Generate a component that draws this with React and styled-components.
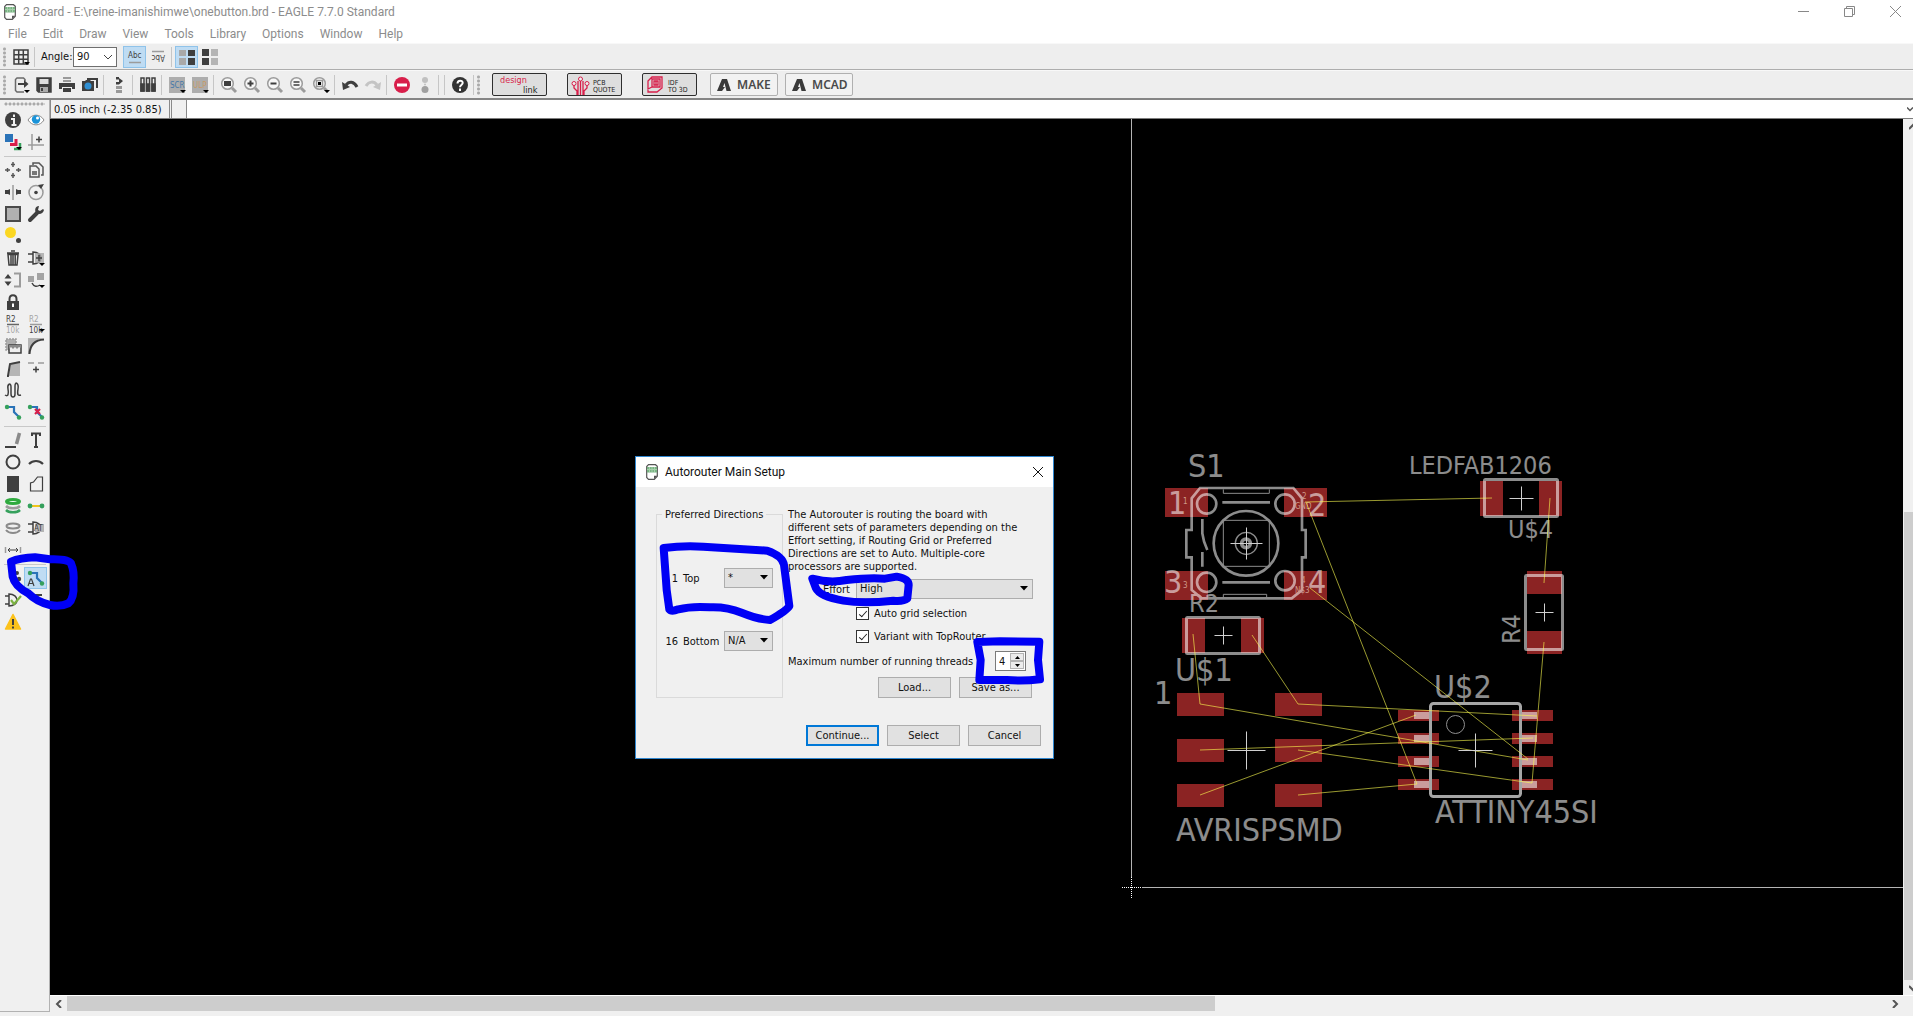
import React from "react";
import styled, { createGlobalStyle, css } from "styled-components";

const uiFont = `Roboto, "Open Sans", sans-serif`;
const badgeFont = `"Noto Sans", "Open Sans", sans-serif`;
const formFont = `"DejaVu Sans Condensed", "DejaVu Sans", sans-serif`;
const ink = "#3f3f3f";
const soft = "#9b9b9b";
const green = "#35a05c";
const blue = "#2a73b8";
const red = "#d81e4a";

const Global = createGlobalStyle`
  *, *::before, *::after { box-sizing: border-box; }
  html, body { margin: 0; height: 100%; overflow: hidden; }
  body { background: #f0f0f0; font-family: ${formFont}; font-size: 11px; color: #111; }
  button, input, select { font: inherit; color: inherit; margin: 0; }
`;

const Shell = styled.div`
  position: relative;
  display: flex;
  flex-direction: column;
  height: 100vh;
  padding-bottom: 4px;
  background: #f0f0f0;
  overflow: hidden;
`;

const TitleBar = styled.header`
  display: flex;
  align-items: center;
  height: 23px;
  padding-left: 4px;
  gap: 7px;
  background: #fff;
  font-family: ${uiFont};
  font-size: 12px;
  color: #8c8c8c;
`;

const TitleText = styled.h1`
  flex: 1;
  margin: 0;
  font-size: 12px;
  font-weight: 400;
  line-height: 20px;
  white-space: nowrap;
`;

const WindowControls = styled.div`
  display: flex;
  gap: 10px;
`;

const PlainButton = styled.button`
  display: flex;
  align-items: center;
  justify-content: center;
  padding: 0;
  border: 0;
  background: none;
`;

const WindowButton = styled(PlainButton)`
  width: 36px;
  height: 20px;
`;

const MenuBar = styled.nav`
  display: flex;
  gap: 16px;
  height: 20px;
  padding-left: 8px;
  background: #fff;
  font-family: ${uiFont};
  font-size: 12px;
  line-height: 22px;
`;

const MenuLink = styled.a`
  color: #8c8c8c;
  text-decoration: none;
`;

const Toolbar = styled.div`
  display: flex;
  align-items: center;
  height: ${(p) => p.$height}px;
  padding-left: 3px;
  background: #eeeeee;
  border-top: 1px solid #f8f8f8;
  border-bottom: ${(p) => (p.$last ? "2px solid #858585" : "1px solid #adadad")};
`;

const Grip = styled.span`
  flex: none;
  width: 3px;
  height: 20px;
  margin-right: 3px;
  background: radial-gradient(circle, #a9a9a9 1px, transparent 2px) 0 0 / 3px 4px;
`;

const Separator = styled.span`
  flex: none;
  width: 6px;
  height: 20px;
  background: linear-gradient(#c6c6c6, #c6c6c6) 2px 0 / 1px 100% no-repeat;
`;

const ToolButton = styled(PlainButton)`
  flex: none;
  width: 23px;
  height: 22px;
  ${(p) =>
    p.$active &&
    css`
      background: #bfdcf3;
      border: 1px solid #8fc3ea;
    `}
`;

const AngleLabel = styled.label`
  width: 35px;
  padding-left: 3px;
  font-size: 11px;
`;

const SelectWrap = styled.span`
  position: relative;
  display: flex;
  flex: none;
  width: ${(p) => p.$width || 49}px;
  height: 20px;
`;

const SelectBox = styled.select`
  appearance: none;
  width: 100%;
  height: 20px;
  padding: 0 3px;
  border: 1px solid ${(p) => (p.$light ? "#6f6f6f" : "#adadad")};
  border-radius: 0;
  background: ${(p) => (p.$light ? "#fff" : "#e1e1e1")};
  font-size: 11px;
  line-height: 18px;
`;

const SelectArrow = styled.svg`
  position: absolute;
  right: 5px;
  top: 7px;
  pointer-events: none;
`;

const AngleWrap = styled(SelectWrap)`
  margin-right: 6px;
`;

const BadgeRow = styled.div`
  display: flex;
  align-items: center;
  padding-left: 9px;
`;

const Badge = styled.button`
  display: flex;
  width: 55px;
  height: 23px;
  margin-right: 20px;
  padding: 0;
  border: 1px solid #2e2e2e;
  border-radius: 2px;
  background: #dedede;
`;

const AppBadge = styled.button`
  display: flex;
  align-items: center;
  gap: 6px;
  width: 68px;
  height: 23px;
  margin: 0 14px 0 -7px;
  padding: 0 0 0 6px;
  border: 1px solid #b0b0b0;
  border-radius: 2px;
  background: #f2f2f2;
  color: #4a4a4a;
  font-family: ${badgeFont};
  font-size: 12px;
  font-weight: 600;
`;

const Workspace = styled.div`
  display: flex;
  flex: 1;
  min-height: 0;
`;

const Palette = styled.aside`
  width: 50px;
  flex: none;
  padding: 2px 2px 0 1px;
  border-right: 1px solid #b2b2b2;
  border-bottom: 1px solid #b2b2b2;
`;

const PaletteGrip = styled.div`
  height: 4px;
  margin: 0 2px 3px 3px;
  background: radial-gradient(circle, #a9a9a9 1px, transparent 2px) 0 0 / 4px 4px;
`;

const PaletteGroup = styled.div`
  display: grid;
  grid-template-columns: 23px 23px;
  grid-auto-rows: 22px;
  & + & {
    padding-top: 6px;
    background: linear-gradient(#c8c8c8, #c8c8c8) 3px 3px / 42px 1px no-repeat;
  }
`;

const Main = styled.main`
  display: flex;
  flex-direction: column;
  flex: 1;
  min-width: 0;
`;

const CommandRow = styled.div`
  display: flex;
  height: 19px;
  border-bottom: 1px solid #7d7d7d;
`;

const Coordinates = styled.output`
  width: 120px;
  padding-left: 3px;
  border-left: 1px solid #8a8a8a;
  border-right: 1px solid #8a8a8a;
  font-size: 11px;
  line-height: 20px;
  white-space: nowrap;
`;

const StatusCell = styled.span`
  width: 16px;
  border-left: 1px solid #8a8a8a;
  border-right: 1px solid #8a8a8a;
  margin-left: 1px;
`;

const CommandInput = styled.input`
  flex: 1;
  min-width: 0;
  border: 0;
  padding: 0 4px;
  background: #fff;
  outline: 0;
`;

const ComboCorner = styled.span`
  display: flex;
  align-items: center;
  width: 6px;
  background: #fff;
  overflow: hidden;
`;

const CanvasRow = styled.div`
  display: flex;
  flex: 1;
  min-height: 0;
`;

const Canvas = styled.section`
  position: relative;
  flex: 1;
  min-width: 0;
  background: #000;
  overflow: hidden;
`;

const BoardSvg = styled.svg`
  display: block;
  width: 100%;
  height: 100%;
  font-family: ${formFont};
`;

const VScroll = styled.div`
  display: flex;
  flex-direction: column;
  width: 10px;
  padding-left: 1px;
  overflow: hidden;
  background: #f0f0f0;
`;

const HScroll = styled.div`
  display: flex;
  height: 17px;
  padding-bottom: 1px;
  border-top: 1px solid #fff;
  padding-right: 10px;
  background: #f0f0f0;
`;

const ScrollEnd = styled(PlainButton)`
  flex: none;
  width: 17px;
  height: 15px;
`;

const Track = styled.span`
  flex: ${(p) => p.$part} 1 0;
  background: ${(p) => (p.$thumb ? "#cdcdcd" : "transparent")};
`;

const Dialog = styled.div`
  position: absolute;
  left: 585px;
  top: 337px;
  width: 419px;
  border: 1px solid #2f86cf;
  background: #f0f0f0;
`;

const DialogTitle = styled.div`
  display: flex;
  align-items: center;
  gap: 7px;
  height: 30px;
  padding: 0 10px;
  background: #fff;
  font-family: ${uiFont};
  font-size: 12px;
`;

const DialogName = styled.h2`
  flex: 1;
  margin: 0;
  font-size: 12px;
  font-weight: 400;
`;

const DialogBody = styled.form`
  padding: 21px 12px 12px 20px;
  font-size: 11px;
  line-height: 13px;
`;

const Columns = styled.div`
  display: flex;
  gap: 5px;
`;

const Directions = styled.fieldset`
  width: 127px;
  height: 190px;
  margin: 0;
  padding: 0;
  border: 1px solid #dadada;
`;

const Legend = styled.legend`
  margin-left: 5px;
  padding: 0 3px;
  line-height: 13px;
`;

const LayerRows = styled.div`
  display: grid;
  gap: 43px;
  padding-top: 47px;
`;

const LayerRow = styled.div`
  display: flex;
  align-items: center;
`;

const LayerNumber = styled.span`
  width: 21px;
  text-align: right;
`;

const LayerName = styled.label`
  width: 46px;
  padding-left: 5px;
`;

const Settings = styled.div`
  width: 245px;
`;

const Intro = styled.p`
  margin: 0 0 6px;
  white-space: pre;
`;

const EffortRow = styled.div`
  display: flex;
  align-items: center;
  justify-content: flex-end;
  gap: 6px;
  margin-bottom: 3px;
`;

const CheckRow = styled.label`
  display: flex;
  align-items: center;
  gap: 5px;
  height: 23px;
  margin-left: 68px;
  white-space: nowrap;
`;

const CheckBox = styled.input`
  appearance: none;
  width: 13px;
  height: 13px;
  border: 1px solid #333;
  background: #fff;
  display: grid;
  place-items: center;
  &:checked::after {
    content: "";
    width: 8px;
    height: 4px;
    margin-top: -2px;
    border-left: 1px solid #222;
    border-bottom: 1px solid #222;
    transform: rotate(-48deg);
  }
`;

const ThreadsRow = styled.div`
  display: flex;
  align-items: center;
  justify-content: space-between;
  height: 20px;
  margin: 3px 7px 6px 0;
`;

const SpinBox = styled.span`
  display: flex;
  width: 31px;
  height: 20px;
  border: 1px solid #7a7a7a;
  background: #fff;
`;

const SpinInput = styled.input`
  width: 14px;
  padding: 0 0 0 3px;
  border: 0;
  background: none;
  outline: 0;
`;

const SpinArrows = styled.span`
  display: flex;
  flex-direction: column;
  width: 14px;
  padding: 1px 0;
`;

const SpinButton = styled(PlainButton)`
  flex: 1;
  border: 1px solid #b4b4b4;
  background: #ececec;
`;

const ButtonRow = styled.div`
  display: flex;
  justify-content: flex-end;
  gap: 8px;
  padding-right: ${(p) => (p.$inset ? 1 : 0)}px;
  margin-top: ${(p) => (p.$inset ? 0 : 27)}px;
`;

const PushButton = styled.button`
  width: 73px;
  height: 21px;
  padding: 0;
  border: ${(p) => (p.$default ? "2px solid #0078d7" : "1px solid #adadad")};
  background: #e1e1e1;
  font-size: 11px;
  line-height: 13px;
`;

const DialogMarks = styled.svg`
  position: absolute;
  inset: 0;
  pointer-events: none;
`;

const PaletteMark = styled.svg`
  position: absolute;
  left: 0;
  top: 540px;
  pointer-events: none;
`;

function Icon({ children }) {
  return (
    <svg width="16" height="16" viewBox="0 0 16 16" fill="none" stroke={ink} strokeWidth="1.5" overflow="visible" aria-hidden="true">
      {children}
    </svg>
  );
}

const More = () => <path d="M11 13h6l-3 3z" fill="#000" stroke="none" />;

function BoardIcon() {
  return (
    <svg width="12" height="16" viewBox="0 0 12 16" aria-hidden="true">
      <path d="M2.5.7h7l1.8 1.6v10l-3 3H2.5L.7 13.5v-11z" fill="#fff" stroke="#555" strokeWidth="1.2" />
      <path d="M1 3h10v5.5H1z" fill="#79b383" />
      <path d="M1 5.5h10M3.500 3v5M6 3v5M8.500 3v5" stroke="#a5cfab" />
      <path d="M8 15.200v-3.400h3.500z" fill="#555" />
    </svg>
  );
}

const Lens = ({ children }) => (
  <Icon>
    <circle cx="6.500" cy="6.500" r="5.800" stroke={soft} fill="#f7f7f7" />
    <path d="M11 11l4 4" stroke={soft} strokeWidth="3" />
    {children}
  </Icon>
);

const wire = (
  <>
    <path d="M2 3h7v5l5 5" stroke={blue} strokeWidth="2.200" />
    <circle cx="2" cy="3" r="2.200" fill={green} stroke="none" />
    <circle cx="14" cy="13.500" r="2.200" fill={green} stroke="none" />
  </>
);

const icons = {
  grid: <Icon><path d="M1 1h14v14H1zM5.700 1v14M10.300 1v14M1 5.700h14M1 10.300h14" /><More /></Icon>,
  abc: <Icon><text x="1" y="9" fontSize="8" fill={ink} stroke="none">Abc</text><path d="M2 13.500h12" stroke={soft} /></Icon>,
  abcFlip: <Icon><path d="M2 2.500h12" stroke={soft} /><text x="-15" y="-6" fontSize="8" fill={ink} stroke="none" transform="rotate(180)">Abc</text></Icon>,
  tilesA: <Icon><g stroke="none"><path d="M0 1h7v6H0zM0 9h7v7H0z" fill="#a9a9a9" /><path d="M9 1h7v6H9zM9 9h7v7H9z" fill={ink} /></g></Icon>,
  tilesB: <Icon><g stroke="none"><path d="M0 0h7v7H0zM0 9h7v7H0z" fill={ink} /><path d="M9 0h7v7H9zM9 9h7v7H9z" fill="#b4b4b4" /></g></Icon>,
  open: <Icon><path d="M12 4V2.500L10.500 1H4L2.500 2.500v11L4 15h7" stroke="#6a6a6a" /><path d="M5 6h6V3l4.500 4-4.500 4V8H5z" fill={ink} stroke="none" /><More /></Icon>,
  save: <Icon><path d="M1 1h14v14H2.500L1 13.500z" fill={ink} /><path d="M3.500 2h9v5h-9z" fill="#ddd" stroke="none" /><path d="M4 10h8v5H4z" fill="#aaa" stroke="none" /><path d="M5 11h2v3H5z" fill={ink} stroke="none" /></Icon>,
  print: <Icon><g stroke="none"><path d="M4 0h8v2H4zM4 3h8v2H4z" fill="#999" /><path d="M0 6h16v6h-3v-2H3v2H0z" fill={ink} /><path d="M4 11h8v4H4z" fill={ink} /></g></Icon>,
  camera: <Icon><path d="M5 2h10v9" stroke={ink} strokeWidth="2" /><path d="M0 4h3l1-1h4l1 1h3v10H0z" fill={ink} stroke="none" /><circle cx="6" cy="9" r="3.500" fill="#2f8fd3" stroke="none" /></Icon>,
  swap: <Icon><path d="M5 0h3v1l4 3-4 3.500H5V5h3V2.500H5z" fill={ink} stroke="none" /><path d="M5 9h6v3H5zM5 13h6v3H5z" fill="#999" stroke="none" /></Icon>,
  tubes: <Icon><path d="M1 1h3v13H1zM6.500 1h3v13h-3zM12 1h3v13h-3z" /><path d="M1 7h3v7H1zM6.500 7h3v7h-3zM12 7h3v7h-3z" fill={ink} /></Icon>,
  scr: <Icon><path d="M0 0h16v16H0z" fill="#adadad" stroke="none" /><text x="1" y="11" fontSize="8" fill="#4478a8" stroke="none">SCR</text><More /></Icon>,
  ulp: <Icon><path d="M0 0h16v16H0z" fill="#adadad" stroke="none" /><text x="1" y="11" fontSize="8" fill="#c79b64" stroke="none">ULP</text><More /></Icon>,
  zoomFit: <Lens><path d="M3 4h7v5H3z" fill={ink} stroke="none" /></Lens>,
  zoomIn: <Lens><path d="M3.500 6.500h6M6.500 3.500v6" strokeWidth="2" /></Lens>,
  zoomOut: <Lens><path d="M3.500 6.500h6" strokeWidth="2" /></Lens>,
  zoomRedraw: <Lens><path d="M3.500 5h6M3.500 8h6" /></Lens>,
  zoomSelect: <Lens><path d="M3.500 3.500h6v6h-6z" stroke={soft} /><path d="M5 5h3v3H5z" fill="#000" stroke="none" /><More /></Lens>,
  undo: <Icon><path d="M4 8c3-4 8-4 11 2" strokeWidth="3" /><path d="M0 5l1 8 7-3z" fill={ink} stroke="none" /></Icon>,
  redo: <Icon><path d="M12 8C9 4 4 4 1 9" strokeWidth="3" stroke="#c4c4c4" /><path d="M16 5l-1 8-7-3z" fill="#c4c4c4" stroke="none" /></Icon>,
  stop: <Icon><circle cx="8" cy="8" r="8" fill={red} stroke="none" /><path d="M3 8h10" stroke="#fff" strokeWidth="3" /></Icon>,
  dots: <Icon><circle cx="8" cy="3" r="3" fill="#c0c0c0" stroke="none" /><circle cx="8" cy="7.500" r="1" fill="#c0c0c0" stroke="none" /><circle cx="8" cy="12.500" r="3.500" fill="#a0a0a0" stroke="none" /></Icon>,
  help: <Icon><circle cx="8" cy="8" r="8" fill="#333" stroke="none" /><path d="M5.500 6.500c0-4 5.500-3.500 5.200-.5C10.500 8 8 8 8 10.200M8 11.500V14" stroke="#fff" strokeWidth="2" /></Icon>,
  info: <Icon><circle cx="8" cy="8" r="8" fill={ink} stroke="none" /><path d="M6 7h3v6M6.500 13h5M9 2.500v2.500" stroke="#f0f0f0" strokeWidth="2" /></Icon>,
  eye: <Icon><path d="M0 8c4-6.500 12-6.500 16 0-4 6.500-12 6.500-16 0z" fill="#fff" stroke="#8c8c8c" strokeWidth="1" /><circle cx="8" cy="7.500" r="4.200" fill="#1a93d8" stroke="none" /><circle cx="9.500" cy="6" r="1.500" fill="#fff" stroke="none" /></Icon>,
  layers: <Icon><path d="M0 0h8v8H0z" fill={blue} stroke="none" /><path d="M5 10.500h6V5" stroke={red} strokeWidth="3" /><path d="M9 15h6V9" stroke={green} strokeWidth="2.500" /><More /></Icon>,
  mark: <Icon><path d="M4 0v16M0 11h16" stroke={soft} /><path d="M8 5.500h6M11 2.500v6" /></Icon>,
  move: <Icon><path d="M8 0v5M6 2.500h4M8 11v5M6 13.500h4M0 8h5M2.500 6v4M11 8h5M13.500 6v4" stroke="#555" /></Icon>,
  copy: <Icon><path d="M5 3V1h6l4 4v8h-2" stroke="#555" /><path d="M2 4h6l3 3v8H2z" fill="#f0f0f0" stroke="#555" /><path d="M4 9h5v4H4z" fill="#777" stroke="none" /></Icon>,
  mirror: <Icon><path d="M8 1v15" stroke={soft} /><path d="M0 6h3l2-1v6l-2-1H0zM16 6h-3l-2-1v6l2-1h3z" fill={ink} stroke="none" /></Icon>,
  rotate: <Icon><circle cx="8" cy="8.500" r="7" stroke={soft} /><circle cx="8" cy="8.500" r="1.800" fill={ink} stroke="none" /><path d="M10 1l6-1-3 5z" fill={ink} stroke="none" /></Icon>,
  group: <Icon><path d="M1 1h14v14H1z" fill="#b1b1b1" stroke="#4a4a4a" strokeWidth="2" /></Icon>,
  wrench: <Icon><path d="M2 14l7-7" strokeWidth="4" strokeLinecap="round" /><path d="M15 3l-3 2-2-1 1-4C7 0 6.500 4 8 7c3 2 7 1 8-3z" fill={ink} stroke="none" /></Icon>,
  ripup: <Icon><circle cx="5.500" cy="4.500" r="5.500" fill="#fbd722" stroke="none" /><circle cx="13.500" cy="12.500" r="2.500" fill={ink} stroke="none" /></Icon>,
  trash: <Icon><path d="M2 3h12M6 1h4M3 4.500h10L12 15H4zM6 5v10M8 5v10M10.200 5v10" /></Icon>,
  add: <Icon><path d="M0 4h5M0 12h5M5 2v12c5 0 8-3 8-6s-3-6-8-6z" /><path d="M7 3h9v10H7z" fill="#a8a8a8" stroke="none" opacity=".8" /><path d="M8 8h6M11 5v6" /><More /></Icon>,
  pinswap: <Icon><path d="M3 2l3.500 4.500h-7zM3 14L-.5 9.500h7z" fill={ink} stroke="none" /><path d="M9 1.500h6v13H9" stroke={soft} strokeWidth="2" /></Icon>,
  replace: <Icon><path d="M0 4h6v6H0zM9 1h7v7H9z" fill="#a3a3a3" stroke="none" /><path d="M4 11c2 4 5 4 8 2" /><More /></Icon>,
  lock: <Icon><path d="M4.500 8V5c0-5 7-5 7 0v3" strokeWidth="2" /><path d="M2 7h12v9H2z" fill={ink} stroke="none" /><path d="M8 9.500V13" stroke="#fff" strokeWidth="2" /></Icon>,
  name: <Icon><text x="1" y="6" fontSize="8" fill={ink} stroke="none">R2</text><path d="M2 8.500h12" stroke="#666" /><text x="1" y="17" fontSize="8" fill="#a5a5a5" stroke="none">10k</text></Icon>,
  value: <Icon><text x="1" y="6" fontSize="8" fill="#a5a5a5" stroke="none">R2</text><path d="M2 8.500h12" stroke={soft} /><text x="1" y="17" fontSize="8" fill={ink} stroke="none">10k</text><More /></Icon>,
  smash: <Icon><path d="M1 1h10v11H1z" fill="#b0b0b0" stroke={soft} strokeDasharray="2 1" /><path d="M4 7h12v8H4z" fill="#f0f0f0" /><path d="M4 7h12v3l-2-1-2 2-2-2-2 2-2-2-2 2z" fill="#8a8a8a" stroke="none" /></Icon>,
  miter: <Icon><path d="M0 0h16C6 2 3 7 2 16H0z" fill="#b5b5b5" stroke="none" /><path d="M1.500 16C2 6 7 2 16 1.500" strokeWidth="2" /></Icon>,
  split: <Icon><path d="M4 16L6 3l9-1v14z" fill="#b5b5b5" stroke="none" /><path d="M2 16h1L5 4l10-2" strokeWidth="2" /></Icon>,
  optimize: <Icon><path d="M0 3h6M10 3h6" stroke={soft} /><path d="M5 9.500h6M8 6.500v6" /></Icon>,
  meander: <Icon><path d="M0 13c3 2 4-1 3-6s3-7 3-2v7c0 4 4 4 4 0V4c0-5 4-3 3 3s0 7 3 6" /></Icon>,
  route: <Icon>{wire}</Icon>,
  unroute: <Icon>{wire}<path d="M7 5l5 5M12 5l-5 5" stroke={red} strokeWidth="2.200" /></Icon>,
  line: <Icon><path d="M0 15h11" strokeWidth="2" /><path d="M14.500 1l-3 11" stroke="#8a8a8a" strokeWidth="3.500" /></Icon>,
  text: <Icon><path d="M4 4V1.500h8V4M8 2v13M6 15h4" strokeWidth="2" /></Icon>,
  circle: <Icon><circle cx="8" cy="8" r="6.500" strokeWidth="2" /></Icon>,
  arc: <Icon><path d="M1 10c4-4 10-4 14 0" strokeWidth="2.200" /></Icon>,
  rect: <Icon><path d="M2 0h12v16H2z" fill={ink} stroke="none" /></Icon>,
  polygon: <Icon><path d="M2.500 15V7l3-1 4-5h5v14z" strokeWidth="1.200" /></Icon>,
  via: <Icon><g strokeWidth="2.500"><path d="M1 12c3 3 11 3 14 0" stroke={green} /><path d="M1 8c3 3 11 3 14 0" stroke={soft} /><ellipse cx="8" cy="3.500" rx="6.500" ry="2" stroke="#2faa3f" strokeWidth="3" fill="#e8fff0" /></g></Icon>,
  signal: <Icon><path d="M3 8h10" stroke="#f0c419" strokeWidth="2" /><circle cx="2" cy="8" r="2.400" fill={green} stroke="none" /><circle cx="14" cy="8" r="2.400" fill={green} stroke="none" /></Icon>,
  hole: <Icon><ellipse cx="8" cy="6" rx="6.500" ry="2.500" stroke="#8a8a8a" strokeWidth="2" /><path d="M1 10c3 4 11 4 14 0" stroke="#8a8a8a" strokeWidth="2" /></Icon>,
  attribute: <Icon><path d="M0 4h5M0 12h5M5 2v12c5 0 8-3 8-6s-3-6-8-6z" /><path d="M7 4h9v8H7z" fill="#b5b5b5" stroke="none" /><text x="6" y="11" fontSize="8" fill={ink} stroke="none">AT</text></Icon>,
  dimension: <Icon><path d="M.500 5v6M15.500 5v6" stroke={soft} /><path d="M3 8h10M5 6L3 8l2 2M11 6l2 2-2 2" strokeWidth="1" /></Icon>,
  ratsnest: <Icon><g fill={ink} stroke="none"><circle cx="7" cy="1" r="2.200" /><circle cx="12" cy="3" r="2" /><circle cx="14" cy="9" r="2.200" /><circle cx="7" cy="10" r="2" /></g></Icon>,
  auto: <Icon>{wire}<path d="M0 16l2.500-7h1L6 16M1 13.500h4" strokeWidth="1.200" /></Icon>,
  erc: <Icon><path d="M0 4h4M0 12h4M4 2v12c5 0 8-3 8-6S9 2 4 2z" /><path d="M6 8l3 4 7-8" stroke="#7bb241" strokeWidth="2.200" /></Icon>,
  drc: <Icon><path d="M3 3h11" strokeWidth="2" /><path d="M3 7h11" stroke={soft} strokeWidth="2" /></Icon>,
  warning: <Icon><path d="M8 .500l7.500 14.500H.5z" fill="#fcc21b" stroke="#fcc21b" strokeLinejoin="round" /><path d="M8 5v6M8 12.500v2" strokeWidth="2" /></Icon>,
};

const menus = ["File", "Edit", "Draw", "View", "Tools", "Library", "Options", "Window", "Help"];

const actionGroups = [
  ["open", "save", "print", "camera"],
  ["swap"],
  ["tubes"],
  ["scr", "ulp"],
  ["zoomFit", "zoomIn", "zoomOut", "zoomRedraw", "zoomSelect"],
  ["undo", "redo"],
  ["stop", "dots"],
  [],
  ["help"],
];

const paletteGroups = [
  ["info", "eye", "layers", "mark"],
  [
    "move", "copy", "mirror", "rotate", "group", "wrench", "ripup", null, "trash", "add", "pinswap", "replace",
    "lock", null, "name", "value", "smash", "miter", "split", "optimize", "meander", null, "route", "unroute",
  ],
  ["line", "text", "circle", "arc", "rect", "polygon", "via", "signal", "hole", "attribute", "dimension", null],
  ["ratsnest", "auto", "erc", "drc", "warning"],
];

const Chevron = ({ d }) => (
  <svg width="8" height="8" viewBox="0 0 8 8" fill="none" stroke="#555" strokeWidth="2" aria-hidden="true">
    <path d={d} />
  </svg>
);

function DropDown({ id, options, width }) {
  return (
    <SelectWrap $width={width}>
      <SelectBox id={id}>
        {options.map((o) => <option key={o}>{o}</option>)}
      </SelectBox>
      <SelectArrow width="8" height="5" viewBox="0 0 8 5" aria-hidden="true">
        <path d="M0 0h8L4 4.500z" fill="#000" />
      </SelectArrow>
    </SelectWrap>
  );
}

const AMark = () => (
  <svg width="14" height="14" viewBox="0 0 14 14" aria-hidden="true">
    <path d="M0 13L5 1h5l4 12h-4.500L7.500 5 6 9h2l-3 4z" fill="#3a3a3a" />
  </svg>
);

function Cross({ x, y, r }) {
  return <path d={`M${x - r} ${y}h${2 * r}M${x} ${y - r}v${2 * r}`} />;
}

const pads = [
  [1165, 488, 43, 29], [1284, 488, 43, 29], [1165, 571, 43, 29], [1284, 571, 43, 29],
  [1182, 618, 23, 35], [1241, 618, 23, 35],
  [1177, 693, 47, 23], [1275, 693, 47, 23], [1177, 739, 47, 23], [1275, 739, 47, 23], [1177, 784, 47, 23], [1275, 784, 47, 23],
  [1480, 481, 23, 35], [1539, 481, 23, 35], [1527, 571, 35, 23], [1527, 631, 35, 23],
  ...[710, 733, 756, 779].flatMap((y) => [[1398, y, 41, 11], [1512, y, 41, 11]]),
];

const airwires = [
  "1305,502 1492,498", "1306,502 1417,784", "1310,588 1528,759", "1550,498 1544,583", "1544,642 1532,783",
  "1193,634 1200,704 1528,760", "1252,635 1298,704 1537,716", "1200,750 1533,738", "1298,750 1532,783",
  "1200,795 1416,715", "1298,795 1417,784",
];

const labels = [
  [1188, 477, 32, "S1"], [1168, 514, 32, "1"], [1308, 516, 32, "2"], [1164, 593, 32, "3"], [1308, 593, 32, "4"],
  [1189, 612, 25, "R2"], [1175, 681, 32, "U$1"], [1154, 704, 32, "1"], [1176, 841, 32, "AVRISPSMD"],
  [1409, 474, 25, "LEDFAB1206"], [1508, 538, 25, "U$4"], [1434, 698, 32, "U$2"], [1435, 823, 32, "ATTINY45SI"],
];

const netLabels = [
  [1183, 504, "1"], [1302, 499, "2"], [1295, 509, "GND"], [1183, 588, "3"], [1301, 583, "4"], [1295, 593, "N$3"],
];

/* Board geometry uses window coordinates; the outer group shifts it to the canvas origin. */
function Board() {
  return (
    <BoardSvg role="img" aria-label="Board layout">
      <g transform="translate(-50 -119)">
        <g fill="#8b2323" shapeRendering="crispEdges">
          {pads.map(([x, y, w, h]) => <rect key={`${x}-${y}`} x={x} y={y} width={w} height={h} />)}
        </g>
        <g opacity=".55" fill="none" stroke="#fff">
          <g transform="translate(1140 430) scale(.33333)" strokeWidth="8">
            <path d="M180 174H460L486 205V300H497V382H486V480L455 505H185L155 480V382H139V300H155V205Z" />
            <circle cx="200" cy="222" r="29" />
            <circle cx="435" cy="222" r="29" />
            <circle cx="200" cy="457" r="29" />
            <circle cx="435" cy="452" r="29" />
            <circle cx="318" cy="340" r="97" />
            <circle cx="318" cy="340" r="13" strokeWidth="11" />
            <path d="M247 217H390M247 457H390M187 267V310Q190 335 202 360M187 366V410" />
            <path d="M250 271H388V409H250ZM250 178V190H388V178M250 505V493H380V505" strokeWidth="3" />
            <circle cx="319" cy="340" r="33" strokeWidth="4" />
          </g>
          <g strokeWidth="3">
            <rect x="1186.500" y="617.500" width="73" height="36" rx="1" />
            <rect x="1484.500" y="479.500" width="73" height="37" rx="1" />
            <rect x="1525.500" y="575.500" width="37" height="74" rx="1" />
          </g>
          <g fill="#fff" stroke="none">
            {labels.map(([x, y, size, text]) => <text key={`${x}-${y}`} x={x} y={y} fontSize={size}>{text}</text>)}
            <text fontSize="25" transform="translate(1520 644) rotate(-90)">R4</text>
            {[712, 735, 758, 781].map((y) => <path key={y} d={`M1414 ${y}h15v7h-15zM1522 ${y}h15v7h-15z`} />)}
          </g>
        </g>
        <rect x="1430.500" y="703.500" width="90" height="93" rx="3" fill="none" stroke="#a6a6a6" strokeWidth="3" />
        <circle cx="1455.500" cy="724.500" r="9" fill="none" stroke="#8f8f8f" />
        <g fill="#cf9a8a" fontSize="8">
          {netLabels.map(([x, y, text]) => <text key={`${x}-${y}`} x={x} y={y}>{text}</text>)}
        </g>
        <g fill="none" stroke="#ffff50" strokeOpacity=".6">
          {airwires.map((points) => <polyline key={points} points={points} />)}
        </g>
        <g stroke="#d0d0d0" fill="none">
          <Cross x={1246.5} y={543.5} r={16} />
          <Cross x={1223.5} y={635.5} r={9} />
          <Cross x={1246.5} y={750.5} r={19} />
          <Cross x={1521.5} y={498.5} r={12} />
          <Cross x={1544.5} y={612.5} r={9} />
          <Cross x={1475.5} y={750.5} r={17} />
          <path d="M1131.500 119V877M1142 887.500H4000" stroke="#b4b4b4" />
          <path d="M1131.500 877v21M1122 887.500h20" stroke="#fff" strokeDasharray="1 1" />
        </g>
      </g>
    </BoardSvg>
  );
}

function AutorouterDialog() {
  return (
    <Dialog role="dialog" aria-labelledby="setup-title">
      <DialogTitle>
        <BoardIcon />
        <DialogName id="setup-title">Autorouter Main Setup</DialogName>
        <PlainButton aria-label="Close">
          <svg width="10" height="10" viewBox="0 0 10 10" stroke="#111" aria-hidden="true"><path d="M0 0l10 10M10 0L0 10" /></svg>
        </PlainButton>
      </DialogTitle>
      <DialogBody onSubmit={(e) => e.preventDefault()}>
        <Columns>
          <Directions>
            <Legend>Preferred Directions</Legend>
            <LayerRows>
              <LayerRow>
                <LayerNumber>1</LayerNumber>
                <LayerName htmlFor="layer-top">Top</LayerName>
                <DropDown id="layer-top" options={["*", "N/A"]} />
              </LayerRow>
              <LayerRow>
                <LayerNumber>16</LayerNumber>
                <LayerName htmlFor="layer-bottom">Bottom</LayerName>
                <DropDown id="layer-bottom" options={["N/A", "*"]} />
              </LayerRow>
            </LayerRows>
          </Directions>
          <Settings>
            <Intro>{`The Autorouter is routing the board with
different sets of parameters depending on the
Effort setting, if Routing Grid or Preferred
Directions are set to Auto. Multiple-core
processors are supported.`}</Intro>
            <EffortRow>
              <label htmlFor="effort">Effort</label>
              <DropDown id="effort" options={["High", "Medium", "Low"]} width={177} />
            </EffortRow>
            <CheckRow><CheckBox type="checkbox" defaultChecked />Auto grid selection</CheckRow>
            <CheckRow><CheckBox type="checkbox" defaultChecked />Variant with TopRouter</CheckRow>
            <ThreadsRow>
              <label htmlFor="threads">Maximum number of running threads</label>
              <SpinBox>
                <SpinInput id="threads" defaultValue="4" />
                <SpinArrows>
                  <SpinButton type="button" aria-label="More threads"><svg width="5" height="3" aria-hidden="true"><path d="M0 3h5L2.500 0z" /></svg></SpinButton>
                  <SpinButton type="button" aria-label="Fewer threads"><svg width="5" height="3" aria-hidden="true"><path d="M0 0h5L2.500 3z" /></svg></SpinButton>
                </SpinArrows>
              </SpinBox>
            </ThreadsRow>
            <ButtonRow $inset>
              <PushButton type="button">Load...</PushButton>
              <PushButton type="button">Save as...</PushButton>
            </ButtonRow>
          </Settings>
        </Columns>
        <ButtonRow>
          <PushButton $default>Continue...</PushButton>
          <PushButton type="button">Select</PushButton>
          <PushButton type="button">Cancel</PushButton>
        </ButtonRow>
      </DialogBody>
      <DialogMarks width="417" height="301" viewBox="18 21 1251 903" fill="none" stroke="#0000f5" strokeWidth="24" strokeLinecap="round" strokeLinejoin="round" aria-hidden="true">
        <path d="M101 294Q160 286 220 290L412 302Q458 318 462 345L478 468Q470 482 420 510Q385 508 335 488Q290 470 240 472Q185 468 145 478Q124 486 118 478L110 420Q105 350 101 294Z" />
        <path d="M547 386Q600 400 650 390Q720 382 765 386L800 380Q836 386 836 405L832 445Q820 455 790 452Q700 462 640 452Q570 440 558 415Z" />
        <path d="M1042 576L1110 574L1228 575L1224 630L1230 688Q1180 694 1130 690L1048 690L1052 630Z" />
      </DialogMarks>
    </Dialog>
  );
}

export default function App() {
  return (
    <Shell>
      <Global />
      <TitleBar>
        <BoardIcon />
        <TitleText>2 Board - E:\reine-imanishimwe\onebutton.brd - EAGLE 7.7.0 Standard</TitleText>
        <WindowControls>
          <WindowButton aria-label="Minimize"><svg width="11" height="11" stroke="#888"><path d="M0 5.500h11" /></svg></WindowButton>
          <WindowButton aria-label="Restore"><svg width="11" height="11" stroke="#888" fill="none"><path d="M.500 2.500h8v8h-8zM2.500 2.500v-2h8v8h-2" /></svg></WindowButton>
          <WindowButton aria-label="Close window"><svg width="11" height="11" stroke="#888"><path d="M0 0l11 11M11 0L0 11" /></svg></WindowButton>
        </WindowControls>
      </TitleBar>
      <MenuBar>{menus.map((m) => <MenuLink key={m} href="#">{m}</MenuLink>)}</MenuBar>
      <Toolbar $height={27}>
        <Grip />
        <ToolButton aria-label="Grid">{icons.grid}</ToolButton>
        <Separator />
        <AngleLabel htmlFor="angle">Angle:</AngleLabel>
        <AngleWrap $width={44}>
          <SelectBox id="angle" $light><option>90</option><option>45</option></SelectBox>
          <SelectArrow width="8" height="6" fill="none" stroke="#444" aria-hidden="true"><path d="M0 1l4 4 4-4" /></SelectArrow>
        </AngleWrap>
        <ToolButton $active aria-label="Upright text">{icons.abc}</ToolButton>
        <ToolButton aria-label="Turned text">{icons.abcFlip}</ToolButton>
        <Separator />
        <ToolButton $active aria-label="Left tiles">{icons.tilesA}</ToolButton>
        <ToolButton aria-label="Right tiles">{icons.tilesB}</ToolButton>
      </Toolbar>
      <Toolbar $height={30} $last>
        <Grip />
        {actionGroups.map((group, i) => (
          <React.Fragment key={i}>
            {i > 0 && <Separator />}
            {group.map((name) => <ToolButton key={name} aria-label={name}>{icons[name]}</ToolButton>)}
          </React.Fragment>
        ))}
        <Separator />
        <Grip />
        <BadgeRow>
          <Badge aria-label="Design link">
            <svg width="53" height="21" fontSize="9" aria-hidden="true">
              <text x="7" y="9" fill={red}>design</text>
              <text x="30" y="19" fill="#222">link</text>
            </svg>
          </Badge>
          <Badge aria-label="PCB quote">
            <svg width="53" height="21" fontSize="7" aria-hidden="true">
              <path d="M6 11v3l3 3v4M10 7v14M12.500 6v15M15 7v14M19 11v3l-3 3v4" stroke={red} fill="none" strokeWidth="1.300" />
              <g fill="#eee" stroke={red}><circle cx="6" cy="9.500" r="2" /><circle cx="12.500" cy="5" r="2" /><circle cx="19" cy="9.500" r="2" /></g>
              <text x="25" y="11" fill="#222">PCB</text>
              <text x="25" y="18" fill="#222">QUOTE</text>
            </svg>
          </Badge>
          <Badge aria-label="IDF to 3D">
            <svg width="53" height="21" fontSize="7" aria-hidden="true">
              <path d="M5 7l4-4h10v11l-5 4H5zM9 5h8v8H9zM5 7v8l4-2M11 7h4v4h-4zM13 7v4" stroke={red} fill="none" strokeWidth="1.300" />
              <text x="25" y="11" fill="#222">IDF</text>
              <text x="25" y="18" fill="#222">TO 3D</text>
            </svg>
          </Badge>
          <AppBadge><AMark />MAKE</AppBadge>
          <AppBadge><AMark />MCAD</AppBadge>
        </BadgeRow>
      </Toolbar>
      <Workspace>
        <Palette>
          <PaletteGrip />
          {paletteGroups.map((group, i) => (
            <PaletteGroup key={i}>
              {group.map((name, j) =>
                name ? <ToolButton key={name} $active={name === "auto"} aria-label={name}>{icons[name]}</ToolButton> : <span key={j} />
              )}
            </PaletteGroup>
          ))}
        </Palette>
        <Main>
          <CommandRow>
            <Coordinates>0.05 inch (-2.35 0.85)</Coordinates>
            <StatusCell />
            <CommandInput aria-label="Command line" />
            <ComboCorner><Chevron d="M0 2l4 4 4-4" /></ComboCorner>
          </CommandRow>
          <CanvasRow>
            <Canvas>
              <Board />
              <AutorouterDialog />
            </Canvas>
            <VScroll>
              <ScrollEnd aria-label="Scroll up"><Chevron d="M0 6l4-4 4 4" /></ScrollEnd>
              <Track $part={377} />
              <Track $part={466} $thumb />
              <ScrollEnd aria-label="Scroll down"><Chevron d="M0 2l4 4 4-4" /></ScrollEnd>
            </VScroll>
          </CanvasRow>
          <HScroll>
            <ScrollEnd aria-label="Scroll left"><Chevron d="M6 0L2 4l4 4" /></ScrollEnd>
            <Track $part={1148} $thumb />
            <Track $part={671} />
            <ScrollEnd aria-label="Scroll right"><Chevron d="M2 0l4 4-4 4" /></ScrollEnd>
          </HScroll>
        </Main>
      </Workspace>
      <PaletteMark width="90" height="80" viewBox="0 510 270 240" fill="none" stroke="#0000f5" strokeWidth="24" strokeLinecap="round" strokeLinejoin="round" aria-hidden="true">
        <path d="M33 575Q60 564 105 562L150 568Q205 566 213 580Q224 605 220 640Q224 685 205 700Q180 712 150 705Q110 695 85 670Q45 650 38 620Z" />
      </PaletteMark>
    </Shell>
  );
}
